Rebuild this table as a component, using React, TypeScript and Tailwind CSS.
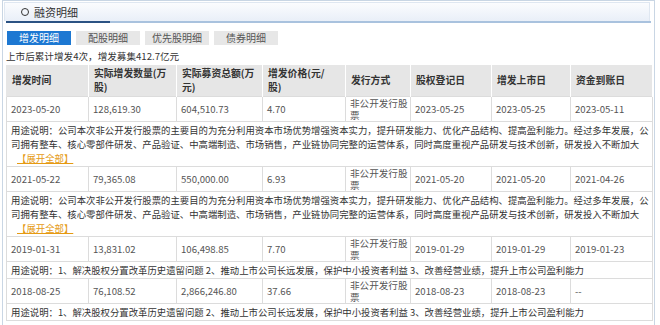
import React from "react";

interface Issue {
  date: string;
  shares: string;
  amount: string;
  price: string;
  method: string;
  regDate: string;
  listDate: string;
  fundDate: string;
  desc: string;
  more?: boolean;
}

const longDesc =
  "用途说明：公司本次非公开发行股票的主要目的为充分利用资本市场优势增强资本实力，提升研发能力、优化产品结构、提高盈利能力。经过多年发展，公司拥有整车、核心零部件研发、产品验证、中高端制造、市场销售，产业链协同完整的运营体系，同时高度重视产品研发与技术创新，研发投入不断加大";
const shortDesc =
  "用途说明：1、解决股权分置改革历史遗留问题 2、推动上市公司长远发展，保护中小投资者利益 3、改善经营业绩，提升上市公司盈利能力";

const issues: Issue[] = [
  { date: "2023-05-20", shares: "128,619.30", amount: "604,510.73", price: "4.70", method: "非公开发行股票", regDate: "2023-05-25", listDate: "2023-05-25", fundDate: "2023-05-11", desc: longDesc, more: true },
  { date: "2021-05-22", shares: "79,365.08", amount: "550,000.00", price: "6.93", method: "非公开发行股票", regDate: "2021-05-20", listDate: "2021-05-20", fundDate: "2021-04-26", desc: longDesc, more: true },
  { date: "2019-01-31", shares: "13,831.02", amount: "106,498.85", price: "7.70", method: "非公开发行股票", regDate: "2019-01-29", listDate: "2019-01-29", fundDate: "2019-01-23", desc: shortDesc },
  { date: "2018-08-25", shares: "76,108.52", amount: "2,866,246.80", price: "37.66", method: "非公开发行股票", regDate: "2018-08-23", listDate: "2018-08-23", fundDate: "--", desc: shortDesc },
];

const tabs = ["增发明细", "配股明细", "优先股明细", "债券明细"];

const headers: React.ReactNode[] = [
  "增发时间",
  <>实际增发数量(万<br />股)</>,
  <>实际募资总额(万<br />元)</>,
  <>增发价格(元/<br />股)</>,
  "发行方式",
  "股权登记日",
  "增发上市日",
  "资金到账日",
];

const colWidths = ["w-[82px]", "w-[88px]", "w-[86px]", "w-[83px]", "w-[65px]", "w-[81px]", "w-[79px]", "w-[82px]"];

export default function App() {
  return (
    <div className="w-[660px] h-[325px] overflow-hidden bg-white text-[#333] font-['Noto_Sans_CJK_SC',sans-serif]">
      <div className="ml-[2px] w-[653px] h-[340px] border-x border-t border-[#c9d6e4] pt-[1px]">
        {/* panel title */}
        <div className="mx-[1px] mr-[4px] h-[19px] flex items-center border border-b-0 border-[#dfe7f1] bg-gradient-to-b from-[#fbfcfe] to-[#e9eff8]">
          <span className="ml-[16px] w-[8px] h-[8px] rounded-full border border-[#333]" />
          <span className="ml-[5px] text-[11px] leading-none text-[#333]">融资明细</span>
        </div>
        <div className="flex h-[2px] mr-[3px]">
          <div className="ml-[3px] w-[104px] bg-[#2b5283]" />
          <div className="flex-1 bg-[#a9c2de]" />
        </div>

        {/* tabs */}
        <div className="mt-[8px] ml-[4px] flex gap-[5px]">
          {tabs.map((t, i) => (
            <div
              key={t}
              className={`w-[64px] h-[14px] flex items-center justify-center text-[10px] leading-none ${i === 0 ? "bg-[#1d78d2] text-white" : "bg-[#e7e7e7] text-[#555]"}`}
            >
              {t}
            </div>
          ))}
        </div>

        <div className="mt-[4px] ml-[3px] h-[14px] text-[9.6px] leading-[14px] text-[#333]">
          上市后累计增发4次，增发募集412.7亿元
        </div>

        {/* table */}
        <table className="mt-[2px] ml-[3px] w-[646px] table-fixed border-collapse text-[9.6px]">
          <colgroup>
            {colWidths.map((w, i) => (
              <col key={i} className={w} />
            ))}
          </colgroup>
          <thead>
            <tr className="bg-[#e6e6e6] h-[31px]">
              {headers.map((h, i) => (
                <th key={i} className="border-x border-white first:border-l-[#e6e6e6] text-left font-bold text-[9.8px] leading-[14px] pl-[5px] text-[#333]">
                  {h}
                </th>
              ))}
            </tr>
          </thead>
          <tbody>
            {issues.map((r) => (
              <React.Fragment key={r.date}>
                <tr className="text-[#555]">
                  {[r.date, r.shares, r.amount, r.price, r.method, r.regDate, r.listDate, r.fundDate].map((v, i) => (
                    <td key={i} className="border border-[#dcdcdc] pl-[4px] pr-0 py-0 h-[25px] leading-[12px] align-middle">
                      {v}
                    </td>
                  ))}
                </tr>
                <tr>
                  <td colSpan={8} className="border border-[#dcdcdc] pl-[4px] pr-[2px] py-[1px] leading-[14px] text-[9.4px] text-[#333]">
                    {r.desc}
                    {r.more && (
                      <div>
                        <a className="ml-[6px] text-[#e59a12] underline">【展开全部】</a>
                      </div>
                    )}
                  </td>
                </tr>
              </React.Fragment>
            ))}
          </tbody>
        </table>
      </div>
    </div>
  );
}
